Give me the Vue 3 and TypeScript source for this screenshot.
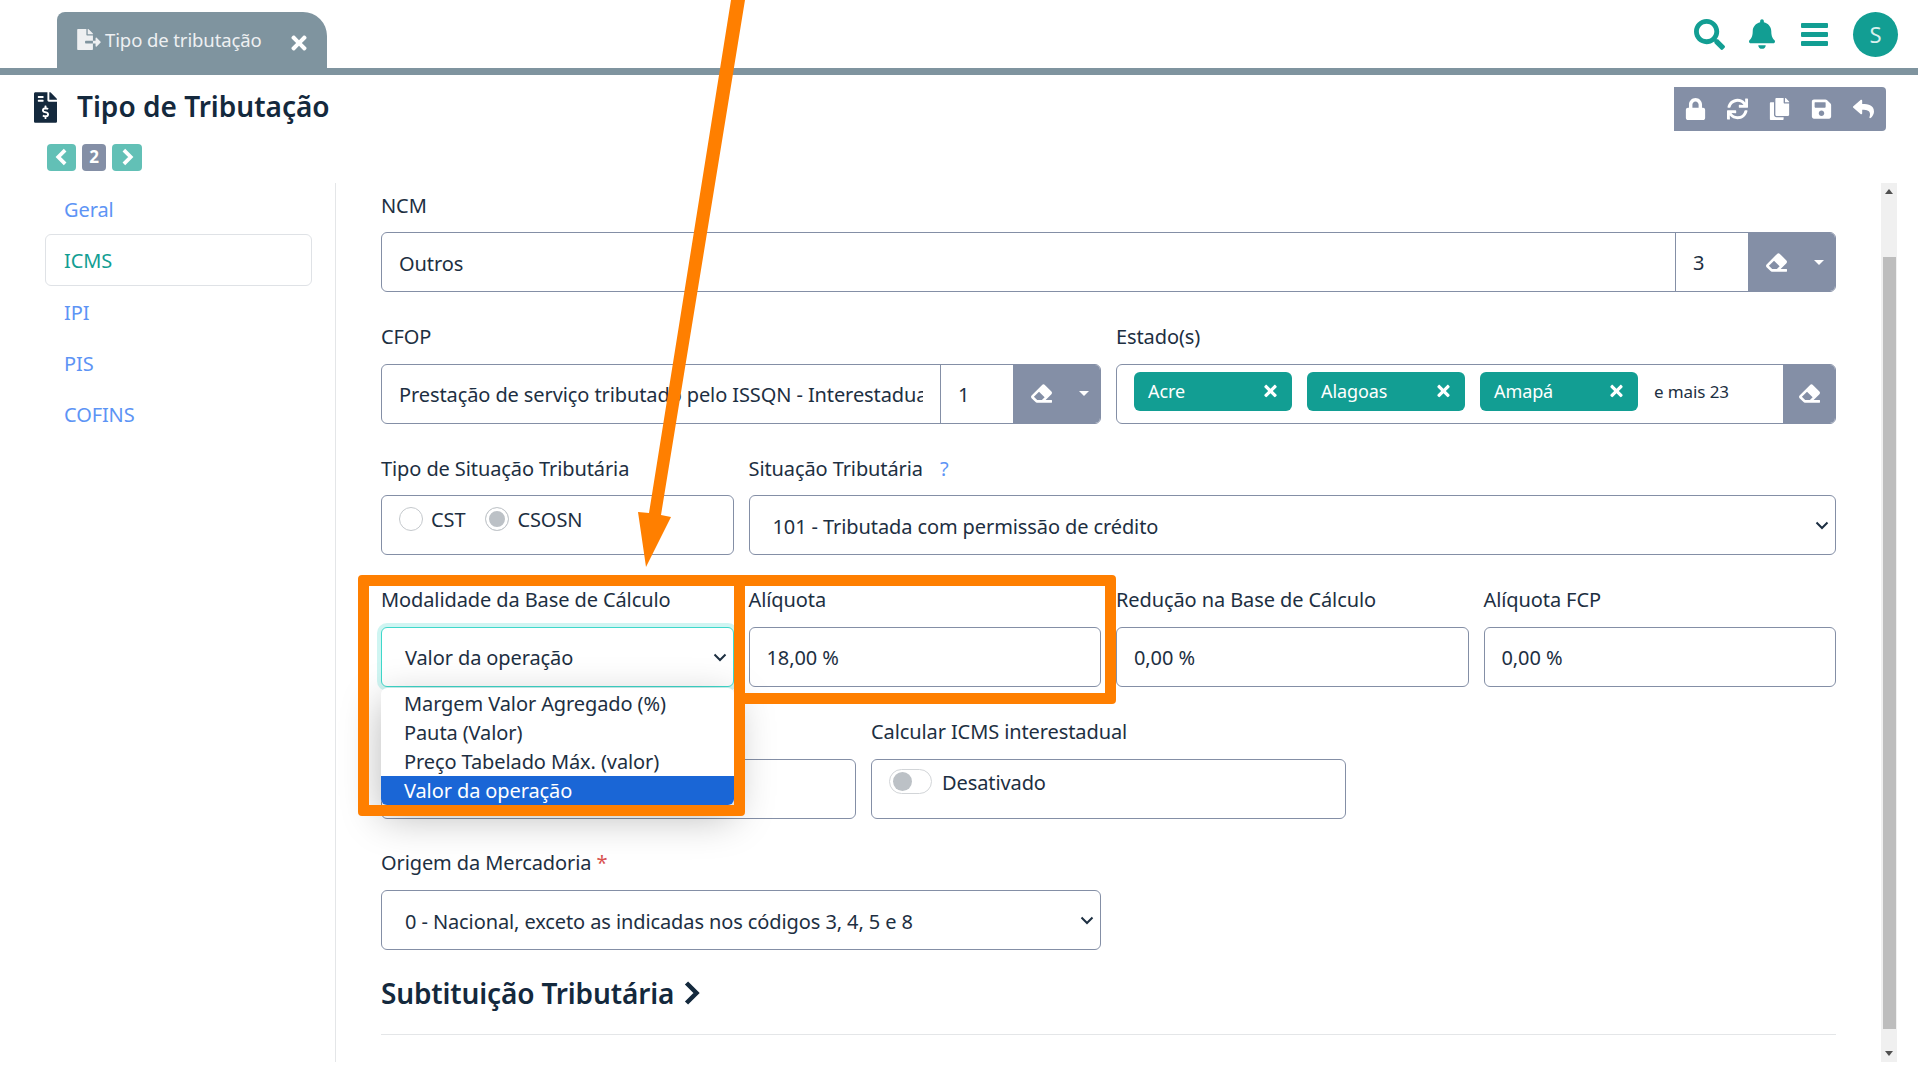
<script setup lang="ts">
const icons: Record<string, { box: string; d: string }> = {
  search: { box: '0 0 512 512', d: 'M505 442.7L405.3 343c-4.5-4.5-10.6-7-17-7H372c27.6-35.3 44-79.7 44-128C416 93.1 322.9 0 208 0S0 93.1 0 208s93.1 208 208 208c48.3 0 92.7-16.4 128-44v16.3c0 6.4 2.5 12.5 7 17l99.7 99.7c9.4 9.4 24.6 9.4 33.9 0l28.3-28.3c9.4-9.4 9.4-24.6.1-34zM208 336c-70.7 0-128-57.2-128-128 0-70.7 57.2-128 128-128 70.7 0 128 57.2 128 128 0 70.7-57.2 128-128 128z' },
  bell: { box: '0 0 448 512', d: 'M224 512c35.32 0 63.97-28.65 63.97-64H160.03c0 35.35 28.65 64 63.97 64zm215.39-149.71c-19.32-20.76-55.47-51.99-55.47-154.29 0-77.7-54.48-139.9-127.94-155.16V32c0-17.67-14.32-32-31.98-32s-31.98 14.33-31.98 32v20.84C118.56 68.1 64.08 130.3 64.08 208c0 102.3-36.15 133.53-55.47 154.29-6 6.45-8.66 14.16-8.61 21.71.11 16.4 12.98 32 32.1 32h383.8c19.12 0 32-15.6 32.1-32 .05-7.55-2.61-15.27-8.61-21.71z' },
  lock: { box: '0 0 448 512', d: 'M400 224h-24v-72C376 68.2 307.8 0 224 0S72 68.2 72 152v72H48c-26.5 0-48 21.5-48 48v192c0 26.5 21.5 48 48 48h352c26.5 0 48-21.5 48-48V272c0-26.5-21.5-48-48-48zm-104 0H152v-72c0-39.7 32.3-72 72-72s72 32.3 72 72v72z' },
  sync: { box: '0 0 512 512', d: 'M440.65 12.57l4 82.77A247.16 247.16 0 0 0 255.83 8C134.73 8 33.91 94.92 12.29 209.82A12 12 0 0 0 24.09 224h49.05a12 12 0 0 0 11.67-9.26 175.91 175.91 0 0 1 317-56.94l-101.46-4.86a12 12 0 0 0-12.57 12v47.41a12 12 0 0 0 12 12H500a12 12 0 0 0 12-12V12a12 12 0 0 0-12-12h-47.37a12 12 0 0 0-11.98 12.57zM255.83 432a175.61 175.61 0 0 1-146-77.8l101.8 4.87a12 12 0 0 0 12.57-12v-47.4a12 12 0 0 0-12-12H12a12 12 0 0 0-12 12V500a12 12 0 0 0 12 12h47.35a12 12 0 0 0 12-12.6l-4.15-82.57A247.17 247.17 0 0 0 255.83 504c121.11 0 221.93-86.92 243.55-201.82a12 12 0 0 0-11.8-14.18h-49.05a12 12 0 0 0-11.67 9.26A175.86 175.86 0 0 1 255.83 432z' },
  copy: { box: '0 0 448 512', d: 'M320 448v40c0 13.255-10.745 24-24 24H24c-13.255 0-24-10.745-24-24V120c0-13.255 10.745-24 24-24h72v296c0 30.879 25.121 56 56 56h168zm0-344V0H152c-13.255 0-24 10.745-24 24v368c0 13.255 10.745 24 24 24h272c13.255 0 24-10.745 24-24V128H344c-13.2 0-24-10.8-24-24zm120.971-31.029L375.029 7.029A24 24 0 0 0 358.059 0H352v96h96v-6.059a24 24 0 0 0-7.029-16.97z' },
  save: { box: '0 0 448 512', d: 'M433.941 129.941l-83.882-83.882A48 48 0 0 0 316.118 32H48C21.49 32 0 53.49 0 80v352c0 26.51 21.49 48 48 48h352c26.51 0 48-21.49 48-48V163.882a48 48 0 0 0-14.059-33.941zM224 416c-35.346 0-64-28.654-64-64 0-35.346 28.654-64 64-64s64 28.654 64 64c0 35.346-28.654 64-64 64zm96-304.52V212c0 6.627-5.373 12-12 12H76c-6.627 0-12-5.373-12-12V108c0-6.627 5.373-12 12-12h228.52c3.183 0 6.235 1.264 8.485 3.515l3.48 3.48A11.996 11.996 0 0 1 320 111.48z' },
  reply: { box: '0 0 512 512', d: 'M8.309 189.836L184.313 37.851C199.719 24.546 224 35.347 224 56.015v80.053c160.629 1.839 288 34.032 288 186.258 0 61.441-39.581 122.309-83.333 154.132-13.653 9.931-33.111-2.533-28.077-18.631 45.344-145.012-21.507-183.51-176.59-185.742V360c0 20.7-24.3 31.453-39.687 18.164l-176.004-152c-11.071-9.562-11.086-26.753 0-36.328z' },
  eraser: { box: '0 0 512 512', d: 'M497.941 273.941c18.745-18.745 18.745-49.137 0-67.882l-160-160c-18.745-18.745-49.137-18.745-67.882 0l-256 256c-18.745 18.745-18.745 49.137 0 67.882l96 96A48.004 48.004 0 0 0 144 480h356c6.627 0 12-5.373 12-12v-40c0-6.627-5.373-12-12-12H355.883l142.058-142.059zm-302.627-62.627l137.373 137.373L265.373 416H150.628l-80-80 124.686-124.686z' },
  fileExport: { box: '0 0 576 512', d: 'M384 121.9c0-6.3-2.5-12.4-7-16.9L279.1 7c-4.5-4.5-10.6-7-17-7H256v128h128zM571 308l-95.7-96.4c-10.1-10.1-27.4-3-27.4 11.3V288h-64v64h64v65.2c0 14.3 17.3 21.4 27.4 11.3L571 332c6.6-6.6 6.6-17.4 0-24zm-379 28v-32c0-8.8 7.2-16 16-16h176V160H248c-13.2 0-24-10.8-24-24V0H24C10.7 0 0 10.7 0 24v464c0 13.3 10.7 24 24 24h336c13.3 0 24-10.7 24-24V352H208c-8.8 0-16-7.2-16-16z' },
  invoice: { box: '0 0 384 512', d: 'M377 105L279.1 7c-4.5-4.5-10.6-7-17-7H256v128h128v-6.1c0-6.3-2.5-12.4-7-16.9zm-153 31V0H24C10.7 0 0 10.7 0 24v464c0 13.3 10.7 24 24 24h336c13.3 0 24-10.7 24-24V160H248c-13.2 0-24-10.8-24-24zM64 72c0-4.42 3.58-8 8-8h80c4.42 0 8 3.58 8 8v16c0 4.42-3.58 8-8 8H72c-4.42 0-8-3.58-8-8V72zm0 80v-16c0-4.42 3.58-8 8-8h80c4.42 0 8 3.58 8 8v16c0 4.42-3.58 8-8 8H72c-4.42 0-8-3.58-8-8zm144 263.88V440c0 4.42-3.58 8-8 8h-16c-4.42 0-8-3.58-8-8v-24.29c-11.29-.58-22.27-4.52-31.37-11.35-3.9-2.93-4.1-8.77-.57-12.14l11.75-11.21c2.77-2.64 6.89-2.76 10.13-.73 3.87 2.42 8.26 3.72 12.82 3.72h28.11c6.5 0 11.8-5.92 11.8-13.19 0-5.95-3.61-11.19-8.77-12.73l-45-13.5c-18.59-5.58-31.58-23.42-31.58-43.39 0-24.52 19.05-44.44 42.67-45.07V232c0-4.42 3.58-8 8-8h16c4.42 0 8 3.58 8 8v24.29c11.29.58 22.27 4.51 31.37 11.35 3.9 2.93 4.1 8.77.57 12.14l-11.75 11.21c-2.77 2.64-6.89 2.76-10.13.73-3.87-2.43-8.26-3.72-12.82-3.72h-28.11c-6.5 0-11.8 5.92-11.8 13.19 0 5.95 3.61 11.19 8.77 12.73l45 13.5c18.59 5.58 31.58 23.42 31.58 43.39 0 24.53-19.05 44.44-42.67 45.07z' },
  times: { box: '0 0 352 512', d: 'M242.72 256l100.07-100.07c12.28-12.28 12.28-32.19 0-44.48l-22.24-22.24c-12.28-12.28-32.19-12.28-44.48 0L176 189.28 75.93 89.21c-12.28-12.28-32.19-12.28-44.48 0L9.21 111.45c-12.28 12.28-12.28 32.19 0 44.48L109.28 256 9.21 356.07c-12.28 12.28-12.28 32.19 0 44.48l22.24 22.24c12.28 12.28 32.2 12.28 44.48 0L176 322.72l100.07 100.07c12.28 12.28 32.2 12.28 44.48 0l22.24-22.24c12.28-12.28 12.28-32.19 0-44.48L242.72 256z' },
}

const toolbar = ['lock', 'sync', 'copy', 'save', 'reply']
const navItems = ['Geral', 'ICMS', 'IPI', 'PIS', 'COFINS']
const tags = ['Acre', 'Alagoas', 'Amapá']
const modalidades = ['Margem Valor Agregado (%)', 'Pauta (Valor)', 'Preço Tabelado Máx. (valor)', 'Valor da operação']
</script>

<template>
  <div class="screen">
    <header class="topbar">
      <div class="tab">
        <svg class="tab-icon" :viewBox="icons.fileExport.box"><path :d="icons.fileExport.d" /></svg>
        <span class="tab-label">Tipo de tributação</span>
        <svg class="tab-close" :viewBox="icons.times.box"><path :d="icons.times.d" /></svg>
      </div>
      <div class="top-actions">
        <svg class="top-search" :viewBox="icons.search.box"><path :d="icons.search.d" /></svg>
        <svg class="top-bell" :viewBox="icons.bell.box"><path :d="icons.bell.d" /></svg>
        <div class="top-menu"><i></i><i></i><i></i></div>
        <div class="avatar">S</div>
      </div>
    </header>

    <div class="page-head">
      <svg class="head-icon" :viewBox="icons.invoice.box"><path :d="icons.invoice.d" /></svg>
      <h1>Tipo de Tributação</h1>
      <div class="toolbar">
        <svg v-for="name in toolbar" :key="name" :viewBox="icons[name].box"><path :d="icons[name].d" /></svg>
      </div>
    </div>

    <div class="pager">
      <span class="page-btn"><svg viewBox="0 0 16 16"><path d="M10.5 2.5 5 8l5.5 5.5" /></svg></span>
      <span class="page-num">2</span>
      <span class="page-btn wide"><svg viewBox="0 0 16 16"><path d="M5.5 2.5 11 8l-5.5 5.5" /></svg></span>
    </div>

    <div class="body">
      <nav class="sidebar">
        <a v-for="item in navItems" :key="item" :class="{ active: item === 'ICMS' }">{{ item }}</a>
      </nav>

      <main class="form">
        <div class="field s12 first">
          <label>NCM</label>
          <div class="control group">
            <span class="value grow">Outros</span>
            <span class="count">3</span>
            <span class="addon">
              <svg class="eraser" :viewBox="icons.eraser.box"><path :d="icons.eraser.d" /></svg>
              <i class="caret"></i>
            </span>
          </div>
        </div>

        <div class="field s6">
          <label>CFOP</label>
          <div class="control group">
            <span class="value grow clip"><span>Prestação de serviço tributado pelo ISSQN - Interestadual</span></span>
            <span class="count">1</span>
            <span class="addon">
              <svg class="eraser" :viewBox="icons.eraser.box"><path :d="icons.eraser.d" /></svg>
              <i class="caret"></i>
            </span>
          </div>
        </div>
        <div class="field s6">
          <label>Estado(s)</label>
          <div class="control group">
            <div class="tags">
              <span v-for="tag in tags" :key="tag" class="tag">
                {{ tag }}
                <svg :viewBox="icons.times.box"><path :d="icons.times.d" /></svg>
              </span>
              <span class="more">e mais 23</span>
            </div>
            <span class="addon single">
              <svg class="eraser" :viewBox="icons.eraser.box"><path :d="icons.eraser.d" /></svg>
            </span>
          </div>
        </div>

        <div class="field s3 first">
          <label>Tipo de Situação Tributária</label>
          <div class="control radios">
            <span class="radio"></span><span class="radio-text">CST</span>
            <span class="radio checked"></span><span class="radio-text">CSOSN</span>
          </div>
        </div>
        <div class="field s9 first">
          <label>Situação Tributária <b class="help">?</b></label>
          <div class="control select">
            <span>101 - Tributada com permissão de crédito</span>
            <svg viewBox="0 0 16 16"><path d="M2.5 5.5 8 11l5.5-5.5" /></svg>
          </div>
        </div>

        <div class="field s3">
          <label>Modalidade da Base de Cálculo</label>
          <div class="control select focused">
            <span>Valor da operação</span>
            <svg viewBox="0 0 16 16"><path d="M2.5 5.5 8 11l5.5-5.5" /></svg>
          </div>
          <ul class="dropdown">
            <li v-for="opt in modalidades" :key="opt" :class="{ selected: opt === 'Valor da operação' }">{{ opt }}</li>
          </ul>
        </div>
        <div class="field s3">
          <label>Alíquota</label>
          <div class="control"><span class="value">18,00 %</span></div>
        </div>
        <div class="field s3">
          <label>Redução na Base de Cálculo</label>
          <div class="control"><span class="value">0,00 %</span></div>
        </div>
        <div class="field s3">
          <label>Alíquota FCP</label>
          <div class="control"><span class="value">0,00 %</span></div>
        </div>

        <div class="field s4">
          <label>&nbsp;</label>
          <div class="control"></div>
        </div>
        <div class="field s4">
          <label>Calcular ICMS interestadual</label>
          <div class="control switch-box">
            <span class="switch"><i></i></span>
            <span class="switch-text">Desativado</span>
          </div>
        </div>
        <div class="spacer s4"></div>

        <div class="field s6">
          <label>Origem da Mercadoria <b class="req">*</b></label>
          <div class="control select">
            <span>0 - Nacional, exceto as indicadas nos códigos 3, 4, 5 e 8</span>
            <svg viewBox="0 0 16 16"><path d="M2.5 5.5 8 11l5.5-5.5" /></svg>
          </div>
        </div>
        <div class="spacer s6"></div>

        <h2 class="s12">
          Subtituição Tributária
          <svg viewBox="0 0 18 26"><path d="M3.5 3l10 10-10 10" /></svg>
        </h2>
      </main>

      <div class="scrollbar">
        <i class="arrow-up"></i>
        <div class="thumb"></div>
        <i class="arrow-down"></i>
      </div>
    </div>

    <!-- tutorial annotations painted over the screenshot -->
    <div class="mark mark-aliquota"></div>
    <div class="mark mark-modalidade"></div>
    <svg class="pointer" viewBox="0 0 1918 1079">
      <polygon points="731,0 745,0 661,515 671,517 646,567 638,512 649,513" />
    </svg>
  </div>
</template>

<style>
html,
body {
  margin: 0;
  background: #fff;
  overflow: hidden;
}
</style>

<style scoped>
.screen {
  position: relative;
  width: 1918px;
  height: 1079px;
  overflow: hidden;
  background: #fff;
  font-family: "Noto Sans", "Liberation Sans", sans-serif;
  font-size: 20px;
  letter-spacing: -0.1px;
  color: #1d2f42;
}

.topbar {
  display: flex;
  align-items: flex-end;
  height: 68px;
  padding-left: 57px;
  border-bottom: 7px solid #7f949f;
}
.tab {
  display: flex;
  align-items: center;
  width: 270px;
  height: 56px;
  box-sizing: border-box;
  padding: 0 20px;
  background: #7f949f;
  border-radius: 8px 24px 0 0;
  color: #eef0f2;
}
.tab-icon {
  width: 24px;
  height: 21px;
  fill: #eef0f2;
  margin-right: 4px;
  margin-top: -1px;
}
.tab-label {
  font-size: 18.5px;
  margin-top: -1px;
  white-space: nowrap;
}
.tab-close {
  width: 16px;
  height: 22px;
  fill: #fff;
  margin-left: auto;
  margin-top: 6px;
}
.top-actions {
  display: flex;
  align-items: center;
  margin-left: auto;
  height: 68px;
  padding-right: 20px;
}
.top-search {
  width: 31px;
  height: 31px;
  fill: #129e93;
}
.top-bell {
  width: 26px;
  height: 30px;
  fill: #129e93;
  margin-left: 24px;
}
.top-menu {
  display: flex;
  flex-direction: column;
  justify-content: space-between;
  width: 27px;
  height: 23px;
  margin-left: 26px;
}
.top-menu i {
  height: 5px;
  border-radius: 1px;
  background: #129e93;
}
.avatar {
  width: 45px;
  height: 45px;
  margin-left: 25px;
  border-radius: 50%;
  background: #129e93;
  color: #d9f0ee;
  font-size: 22px;
  line-height: 45px;
  text-align: center;
}

.page-head {
  display: flex;
  align-items: center;
  height: 44px;
  padding: 12px 32px 0 34px;
}
.head-icon {
  width: 23px;
  height: 31px;
  margin-top: -4px;
  fill: #14293d;
}
.page-head h1 {
  margin: -6px 0 0 20px;
  font-size: 28px;
  font-weight: 600;
  letter-spacing: 0;
  color: #14293d;
}
.toolbar {
  display: flex;
  align-items: center;
  justify-content: space-between;
  width: 212px;
  height: 44px;
  box-sizing: border-box;
  padding: 0 12px 0 11px;
  margin-left: auto;
  background: #848fa6;
  border-radius: 0 4px 4px 0;
}
.toolbar svg {
  width: 21px;
  height: 22px;
  fill: #fff;
}

.pager {
  display: flex;
  align-items: center;
  gap: 6px;
  height: 28px;
  margin: 12px 0 0 47px;
}
.page-btn {
  display: flex;
  align-items: center;
  justify-content: center;
  width: 29px;
  height: 27px;
  border-radius: 4px;
  background: #62c0b6;
}
.page-btn.wide {
  width: 30px;
}
.page-btn svg {
  width: 20px;
  height: 20px;
  fill: none;
  stroke: #fff;
  stroke-width: 3;
}
.page-num {
  width: 24px;
  height: 27px;
  border-radius: 4px;
  background: #848fa6;
  color: #fff;
  font-size: 17px;
  font-weight: 700;
  line-height: 26px;
  text-align: center;
}

.body {
  display: flex;
  height: 879px;
  margin-top: 12px;
}
.sidebar {
  width: 336px;
  flex: none;
  box-sizing: border-box;
  padding-left: 45px;
  border-right: 1px solid #e4e6e8;
}
.sidebar a {
  display: block;
  width: 267px;
  height: 51px;
  box-sizing: border-box;
  padding-left: 18px;
  border: 1px solid transparent;
  border-radius: 6px;
  color: #5d94f5;
  line-height: 51px;
}
.sidebar a.active {
  border-color: #dfe2e6;
  color: #129e93;
  height: 52px;
}

.form {
  display: grid;
  grid-template-columns: repeat(12, minmax(0, 1fr));
  grid-auto-rows: max-content;
  column-gap: 15px;
  row-gap: 31.67px;
  width: 1455px;
  flex: none;
  padding: 9px 0 0 45px;
}
.s12 { grid-column: span 12; }
.s9 { grid-column: span 9; }
.s6 { grid-column: span 6; }
.s4 { grid-column: span 4; }
.s3 { grid-column: span 3; }

.field {
  position: relative;
}
.field label {
  display: block;
  height: 27px;
  margin-bottom: 13px;
  line-height: 25px;
  white-space: nowrap;
}
.field.first label {
  line-height: 27px;
}
.help {
  margin-left: 12px;
  color: #5d94f5;
  font-weight: 400;
}
.req {
  color: #d9534f;
  font-weight: 400;
}
.control {
  display: flex;
  align-items: center;
  height: 60px;
  box-sizing: border-box;
  border: 1px solid #848fa6;
  border-radius: 6px;
  background: #fff;
  overflow: hidden;
}
.value {
  padding: 2px 17px 0;
  white-space: nowrap;
}
.grow {
  flex: 1;
  min-width: 0;
}
.clip span {
  display: block;
  overflow: hidden;
}
.count {
  align-self: stretch;
  width: 73px;
  flex: none;
  box-sizing: border-box;
  padding: 1px 0 0 17px;
  border-left: 1px solid #848fa6;
  line-height: 58px;
}
.addon {
  display: flex;
  align-items: center;
  align-self: stretch;
  width: 88px;
  flex: none;
  box-sizing: border-box;
  padding-left: 18px;
  margin: -1px -1px -1px 0;
  background: #848fa6;
}
.addon.single {
  width: 53px;
  padding-left: 16px;
}
.eraser {
  width: 21px;
  height: 21px;
  fill: #fff;
}
.caret {
  width: 0;
  height: 0;
  margin-left: 27px;
  border-left: 5px solid transparent;
  border-right: 5px solid transparent;
  border-top: 5px solid #fff;
}

.tags {
  display: flex;
  flex: 1;
  align-items: center;
  gap: 15px;
  padding: 0 0 5px 17px;
}
.tag {
  display: flex;
  align-items: center;
  justify-content: space-between;
  width: 158px;
  height: 39px;
  box-sizing: border-box;
  padding: 0 15px 0 14px;
  border-radius: 6px;
  background: #129e93;
  color: #fff;
  font-size: 18px;
}
.tag svg {
  width: 13px;
  height: 18px;
  fill: #fff;
}
.more {
  font-size: 17px;
  margin-left: 1px;
}

.radios {
  align-items: flex-start;
  padding: 11px 0 0 17px;
}
.radio {
  width: 24px;
  height: 24px;
  box-sizing: border-box;
  flex: none;
  border: 1px solid #c4c8cc;
  border-radius: 50%;
  background: #fff;
}
.radio.checked {
  background: #bcc1c6;
  box-shadow: inset 0 0 0 3px #fff;
}
.radio-text {
  margin: -1px 20px 0 8px;
  line-height: 27px;
}

.select {
  position: relative;
  padding-left: 23px;
  white-space: nowrap;
}
.select > span {
  padding-top: 2px;
}
.select svg {
  position: absolute;
  right: 5px;
  top: 21px;
  width: 16px;
  height: 16px;
  fill: none;
  stroke: #1d2f42;
  stroke-width: 2;
}
.focused {
  border-color: #3fd8cb;
  overflow: visible;
  box-shadow: 0 0 0 4px rgba(63, 216, 203, 0.25);
}

.dropdown {
  position: absolute;
  left: 0;
  right: 0;
  top: 101px;
  z-index: 2;
  margin: 0;
  padding: 1px 0 0;
  list-style: none;
  background: #fff;
  border-radius: 6px;
  box-shadow: 0 12px 40px rgba(0, 0, 0, 0.28);
  overflow: hidden;
}
.dropdown li {
  height: 29px;
  padding-left: 23px;
  line-height: 29px;
  white-space: nowrap;
}
.dropdown li.selected {
  background: #1a66d6;
  color: #fff;
}

.switch-box {
  align-items: flex-start;
  padding: 9px 0 0 17px;
}
.switch {
  display: flex;
  align-items: center;
  width: 43px;
  height: 25px;
  box-sizing: border-box;
  padding-left: 3px;
  border: 1px solid #d2d5d8;
  border-radius: 13px;
}
.switch i {
  width: 19px;
  height: 19px;
  border-radius: 50%;
  background: #bcc1c6;
}
.switch-text {
  margin-left: 10px;
  line-height: 28px;
}

h2 {
  display: flex;
  align-items: center;
  height: 69px;
  box-sizing: border-box;
  margin: -16px 0 0;
  padding-bottom: 14px;
  border-bottom: 1px solid #e4e6e8;
  font-size: 28px;
  font-weight: 600;
  letter-spacing: -0.15px;
  color: #14293d;
}
h2 svg {
  width: 18px;
  height: 26px;
  margin-left: 9px;
  fill: none;
  stroke: #14293d;
  stroke-width: 4.5;
}

.scrollbar {
  position: relative;
  width: 16px;
  margin-left: 45px;
  flex: none;
  background: #f0f0f0;
}
.thumb {
  position: absolute;
  left: 2px;
  right: 1px;
  top: 74px;
  bottom: 33px;
  background: #bdbdbd;
}
.arrow-up,
.arrow-down {
  position: absolute;
  left: 4px;
  width: 0;
  height: 0;
  border-left: 4px solid transparent;
  border-right: 4px solid transparent;
}
.arrow-up {
  top: 6px;
  border-bottom: 5px solid #505050;
}
.arrow-down {
  bottom: 6px;
  border-top: 5px solid #505050;
}

.mark {
  position: absolute;
  box-sizing: border-box;
  border: 11px solid #ff7f00;
  border-radius: 4px;
  z-index: 3;
}
.mark-modalidade {
  left: 358px;
  top: 575px;
  width: 387px;
  height: 241px;
}
.mark-aliquota {
  left: 734px;
  top: 575px;
  width: 382px;
  height: 129px;
}
.pointer {
  position: absolute;
  left: 0;
  top: 0;
  width: 1918px;
  height: 1079px;
  z-index: 4;
  fill: #ff7f00;
  pointer-events: none;
}
</style>
